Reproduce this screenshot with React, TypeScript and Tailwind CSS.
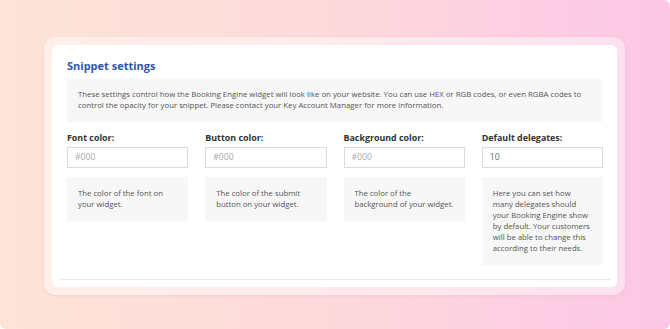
import React from "react";

const fields = [
  { label: "Font color:", value: "", placeholder: "#000", help: "The color of the font on your widget." },
  { label: "Button color:", value: "", placeholder: "#000", help: "The color of the submit button on your widget." },
  { label: "Background color:", value: "", placeholder: "#000", help: "The color of the background of your widget." },
  {
    label: "Default delegates:",
    value: "10",
    placeholder: "",
    help: "Here you can set how many delegates should your Booking Engine show by default. Your customers will be able to change this according to their needs.",
  },
];

export default function App() {
  return (
    <div
      className="w-[670px] h-[329px] bg-white overflow-hidden"
      style={{ fontFamily: '"Open Sans", "Noto Sans", sans-serif' }}
    >
      <div className="w-full h-full rounded-tr-[6px] rounded-b-[6px] bg-gradient-to-r from-[#fee4d7] via-[#fdd9dc] to-[#fcc6e6] pt-[37px] pl-[44px]">
        <div className="w-[581px] h-[258px] rounded-[12px] bg-white/45 shadow-[0_1px_3px_rgba(240,170,190,0.35)] p-[8px]">
          <div className="h-full rounded-[6px] bg-white pt-[13px] px-[15px] flex flex-col">
            <h1 className="text-[11px] leading-[16px] font-bold text-[#2b56ac] mb-[5px]">
              Snippet settings
            </h1>
            <div className="bg-[#f7f7f7] h-[43px] pl-[11px] pr-[11px] pt-[10px] text-[7.8px] leading-[10.5px] text-[#555]">
              These settings control how the Booking Engine widget will look like on your website. You can use HEX or RGB codes, or even RGBA codes to control the opacity for your snippet. Please contact your Key Account Manager for more information.
            </div>
            <div className="grid grid-cols-4 gap-x-[17px] mt-[9px] w-[536px]">
              {fields.map((f) => (
                <div key={f.label} className="flex flex-col items-stretch">
                  <label className="text-[8.9px] leading-[14px] font-bold text-[#333] mb-[2px]">{f.label}</label>
                  <div className="h-[21px] border border-[#dcdcdc] flex items-center pl-[7px] text-[8.7px] text-[#aaa]">
                    {f.value ? <span className="text-[#666]">{f.value}</span> : <span>{f.placeholder}</span>}
                  </div>
                  <div className="mt-[9px] bg-[#f7f7f7] pl-[11px] pr-[11px] pt-[11px] pb-[11px] text-[7.75px] leading-[11px] text-[#555]">
                    {f.help}
                  </div>
                </div>
              ))}
            </div>
            <div className="flex-1" />
            <div className="border-t border-[#e8e8e8] mb-[7px] mx-[-8px]" />
          </div>
        </div>
      </div>
    </div>
  );
}
